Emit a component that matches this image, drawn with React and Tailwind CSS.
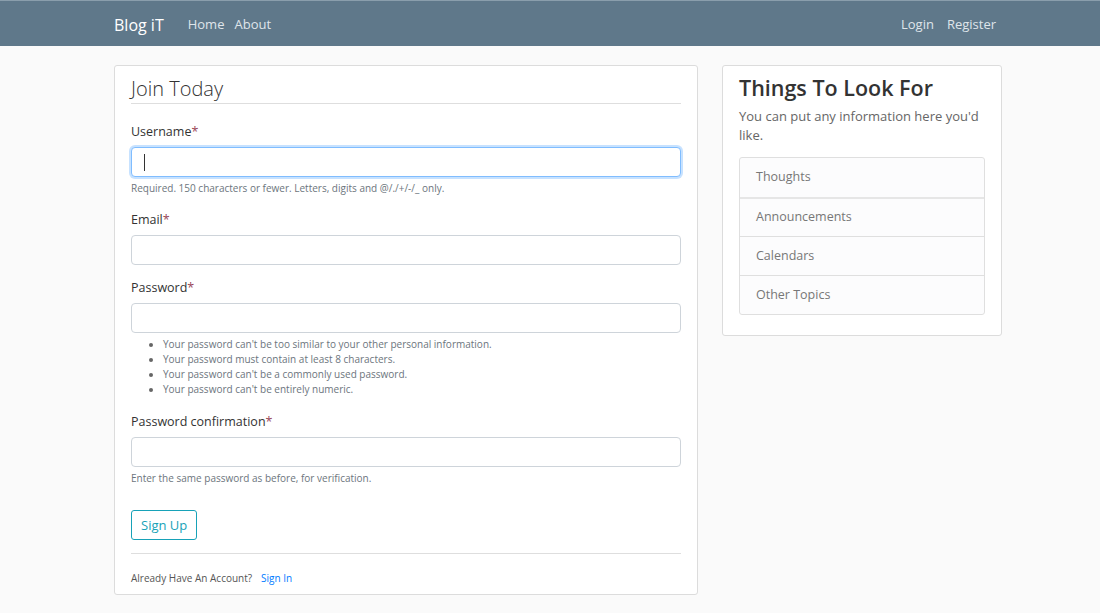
const font = { fontFamily: '"Open Sans", "Noto Sans", sans-serif' };

function Field({ label, focused, help }) {
  return (
    <div className="mt-4">
      <label className="block text-[12.5px] text-[#333] mb-[6px] leading-[18px]">
        {label}
        <span className="text-[#9a4658]">*</span>
      </label>
      <div
        className={`h-[30px] w-full rounded-[4px] bg-white border ${
          focused
            ? "border-[#80bdff] shadow-[0_0_0_2px_rgba(0,123,255,0.22)]"
            : "border-[#ced4da]"
        } flex items-center px-3`}
      >
        {focused && <span className="w-px h-[17px] bg-[#333]" />}
      </div>
      {help}
    </div>
  );
}

export default function App() {
  const rules = [
    "Your password can't be too similar to your other personal information.",
    "Your password must contain at least 8 characters.",
    "Your password can't be a commonly used password.",
    "Your password can't be entirely numeric.",
  ];
  const topics = ["Thoughts", "Announcements", "Calendars", "Other Topics"];

  return (
    <div className="min-h-[613px] bg-[#fafafa]" style={font}>
      <nav className="h-[46px] bg-[#5f788a] border-t border-[#8a9eac]">
        <div className="flex items-center h-full pl-[114px] pr-[104px] pt-[2px]">
          <span className="text-white text-[16px] mr-[24px]">Blog iT</span>
          <a className="text-[#dfe5ea] text-[13px] mr-[10px]">Home</a>
          <a className="text-[#dfe5ea] text-[13px]">About</a>
          <div className="ml-auto flex gap-[13px]">
            <a className="text-[#dfe5ea] text-[13px]">Login</a>
            <a className="text-[#dfe5ea] text-[13px]">Register</a>
          </div>
        </div>
      </nav>

      <div className="flex items-start gap-[24px] pl-[114px] pt-[19px]">
        {/* Registration form */}
        <div className="w-[584px] bg-white border border-[#dcdcdc] rounded-[3px] px-4 pt-[10px] pb-[8px]">
          <h2 className="text-[20px] font-light text-[#333] leading-[26px] pb-[1px] border-b border-[#dedede]">
            Join Today
          </h2>
          <div className="pt-[3px]">
            <Field
              label="Username"
              focused
              help={
                <p className="text-[10px] text-[#6c757d] mt-[5px] leading-[13px]">
                  Required. 150 characters or fewer. Letters, digits and @/./+/-/_ only.
                </p>
              }
            />
            <div className="mt-[7px]">
              <Field label="Email" />
            </div>
            <div className="-mt-[2px]">
              <Field
                label="Password"
                help={
                  <ul className="list-disc pl-[32px] mt-[4px] text-[10px] text-[#6c757d] leading-[15px] marker:text-[#666]">
                    {rules.map((r) => (
                      <li key={r}>{r}</li>
                    ))}
                  </ul>
                }
              />
            </div>
            <div className="mt-[5px]">
              <Field
                label="Password confirmation"
                help={
                  <p className="text-[10px] text-[#6c757d] mt-[5px] leading-[13px]">
                    Enter the same password as before, for verification.
                  </p>
                }
              />
            </div>
            <button className="mt-[25px] h-[30px] px-[9px] border border-[#17a2b8] rounded-[3px] text-[13px] text-[#17a2b8] leading-none">
              Sign Up
            </button>
          </div>
          <div className="border-t border-[#dedede] mt-[13px] pt-[17px] text-[10px] text-[#555]">
            Already Have An Account?
            <a className="text-[#007bff] ml-[9px]">Sign In</a>
          </div>
        </div>

        {/* Sidebar */}
        <div className="w-[280px] bg-white border border-[#dcdcdc] rounded-[3px] px-4 pt-[7px] pb-[20px]">
          <h3 className="text-[21.5px] font-semibold text-[#333] leading-[30px]">Things To Look For</h3>
          <p className="text-[13px] text-[#666] leading-[19px] mt-[4px]">
            You can put any information here you'd like.
          </p>
          <ul className="mt-[12px] border border-[#dfdfdf] rounded-[3px] bg-[#fcfcfd]">
            {topics.map((t, i) => (
              <li
                key={t}
                className={`h-[39px] flex items-center px-4 text-[12.5px] text-[#777] ${
                  i > 0 ? "border-t border-[#dfdfdf]" : ""
                } ${i === 1 ? "border-t-2 border-t-[#e6e6e6]" : ""}`}
              >
                {t}
              </li>
            ))}
          </ul>
        </div>
      </div>
    </div>
  );
}
